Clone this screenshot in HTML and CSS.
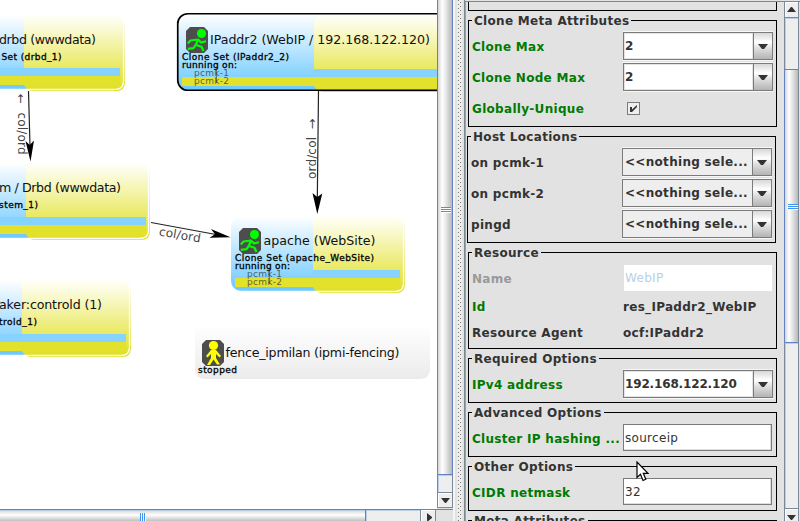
FILE: index.html
```html
<!DOCTYPE html>
<html lang="en">
<head>
<meta charset="utf-8">
<title>Cluster graph</title>
<link rel="stylesheet" href="styles.css">
</head>
<body>
<div class="app">
  <main class="graph-pane">
    <div class="graph-row">
      <svg class="graph" width="437" height="509" viewBox="0 0 437 509">
        <defs>
          <linearGradient id="blue" x1="0" y1="0" x2="0" y2="1"><stop offset="0" stop-color="#fff"/><stop offset="1" stop-color="#69c8ff"/></linearGradient>
          <linearGradient id="yellow" x1="0" y1="0" x2="0" y2="1"><stop offset="0" stop-color="#fffffa"/><stop offset="0.15" stop-color="#fbfbdc"/><stop offset="1" stop-color="#dfdf1e"/></linearGradient>
          <linearGradient id="grey" x1="0" y1="0" x2="0" y2="1"><stop offset="0" stop-color="#fff"/><stop offset="1" stop-color="#ebebeb"/></linearGradient>
          <symbol id="runner" viewBox="0 0 22 26">
            <path d="M4 0H18L22 4V22L18 26H4L0 22V4Z" fill="#4d4d4d"/>
            <circle cx="15.500" cy="6.500" r="4.500" fill="#0f0"/>
            <path d="M1.800 16.500L4.500 13.500L12 12.500L15 15.500L20 14.200M12 12.500L9.800 18L7.500 21.200L1.800 21.800M10 18L15.500 19.800L17.500 24" fill="none" stroke="#0f0" stroke-width="2.200" stroke-linejoin="round"/>
          </symbol>
          <symbol id="stander" viewBox="0 0 22 26">
            <path d="M4 0H18L22 4V22L18 26H4L0 22V4Z" fill="#4d4d4d"/>
            <circle cx="11.500" cy="5.500" r="4.600" fill="#ff0"/>
            <path d="M9 10H14L19 16L17.500 17.500L14 14V18L18 24.500H15L11.500 19.500L8 25H5L9 18V14L5.500 17.500L4 16Z" fill="#ff0"/>
          </symbol>
        </defs>

        <!-- drbd -->
        <rect x="-60" y="15" width="184" height="75" rx="10" fill="url(#blue)"/>
        <path d="M24 15H116Q125 15 125 25V82Q125 91 116 91H33Q27 91 24 85Z" fill="url(#yellow)"/>
        <path d="M-2 89.500H115Q123.500 89.500 123.500 81V23Q123.500 17 118 15.500" class="rim"/>
        <rect x="-2" y="68" width="122" height="8" class="band-blue"/>
        <rect x="-2" y="76" width="122" height="9" class="band-yellow"/>

        <!-- Filesystem -->
        <rect x="-60" y="163" width="208" height="75" rx="10" fill="url(#blue)"/>
        <path d="M26 163H141Q150 163 150 173V231Q150 240 141 240H35Q29 240 26 234Z" fill="url(#yellow)"/>
        <path d="M-2 238.500H140Q148.500 238.500 148.500 230V172Q148.500 166 143 164" class="rim"/>
        <rect x="-2" y="217" width="148" height="8" class="band-blue"/>
        <rect x="-2" y="225" width="148" height="9" class="band-yellow"/>

        <!-- controld -->
        <rect x="-60" y="280" width="190" height="75" rx="10" fill="url(#blue)"/>
        <path d="M22 280H122Q131 280 131 290V348Q131 357 122 357H31Q25 357 22 351Z" fill="url(#yellow)"/>
        <path d="M-2 355.500H121Q129.500 355.500 129.500 347V289Q129.500 283 124 281" class="rim"/>
        <rect x="-2" y="334" width="128" height="8" class="band-blue"/>
        <rect x="-2" y="342" width="128" height="9" class="band-yellow"/>

        <!-- IPaddr2 -->
        <rect x="178" y="14" width="300" height="76" rx="10" fill="url(#blue)"/>
        <path d="M314 23Q315 16 322 15H440V92H324Q317 92 314 86Z" fill="url(#yellow)"/>
        <rect x="314" y="69" width="130" height="8" class="band-blue"/>
        <rect x="182" y="77" width="260" height="9" class="band-yellow"/>
        <rect x="177.750" y="13.750" width="300" height="76.500" rx="10" fill="none" stroke="#000" stroke-width="1.700"/>

        <!-- apache -->
        <rect x="231" y="216" width="172" height="75" rx="10" fill="url(#blue)"/>
        <path d="M313 216H396Q405 216 405 226V284Q405 293 396 293H322Q316 293 313 287Z" fill="url(#yellow)"/>
        <path d="M240 291.500H395Q403.500 291.500 403.500 283V225Q403.500 219 398 217" class="rim"/>
        <rect x="313" y="270" width="87" height="8" class="band-blue"/>
        <rect x="235" y="278" width="165" height="9" class="band-yellow"/>

        <rect x="195" y="325" width="235" height="54" rx="9" fill="url(#grey)"/>

        <path d="M28.500 91L30 146M318.500 91L317.300 200M151 222.500L216 234.500" class="edge"/>
        <path d="M30.500 161.500L25.500 141L29.800 145L34 140.500ZM317.300 214L312.500 193L317.300 197L322.300 193.500ZM230.500 237.300L211 229L215 234.200L209.500 237.700Z"/>

        <g class="edge-label">
          <text transform="translate(17 94) rotate(90)" textLength="10" lengthAdjust="spacingAndGlyphs">←</text>
          <text transform="translate(18 112.500) rotate(90)" textLength="42">col/ord</text>
          <text transform="translate(316 179) rotate(-90)" textLength="42">ord/col</text>
          <text transform="translate(316 129.500) rotate(-90)" textLength="11" lengthAdjust="spacingAndGlyphs">→</text>
          <text transform="translate(158.500 235.500) rotate(9.500)" textLength="42">col/ord</text>
        </g>

        <use href="#runner" x="186" y="27" width="22" height="26"/>
        <use href="#runner" x="239" y="228" width="22" height="26"/>
        <use href="#stander" x="202" y="340" width="22" height="26"/>

        <g class="title">
          <text x="-1" y="44" textLength="97">drbd (wwwdata)</text>
          <text x="-1" y="192" textLength="122">m / Drbd (wwwdata)</text>
          <text x="-1" y="309" textLength="103">aker:controld (1)</text>
          <text x="210" y="44" textLength="220">IPaddr2 (WebIP / 192.168.122.120)</text>
          <text x="263.500" y="245" textLength="112">apache (WebSite)</text>
          <text x="225.500" y="357" textLength="174">fence_ipmilan (ipmi-fencing)</text>
        </g>
        <g class="sub">
          <text x="1.500" y="60" textLength="60">Set (drbd_1)</text>
          <text x="-1" y="208" textLength="39">stem_1)</text>
          <text x="-1" y="325" textLength="38">trold_1)</text>
          <text x="182" y="60" textLength="107">Clone Set (IPaddr2_2)</text>
          <text x="182" y="68" textLength="55">running on:</text>
          <text x="235" y="261" textLength="139">Clone Set (apache_WebSite)</text>
          <text x="235" y="269" textLength="55">running on:</text>
          <text x="198" y="373" textLength="39">stopped</text>
        </g>
        <g class="host">
          <text x="194" y="76" textLength="35">pcmk-1</text>
          <text x="194" y="84" textLength="35">pcmk-2</text>
          <text x="247" y="277" textLength="35">pcmk-1</text>
          <text x="247" y="285" textLength="35">pcmk-2</text>
        </g>
        <path d="M216.500 67V83M269.500 268V284" stroke="#333" stroke-opacity=".6"/>
      </svg>
      <div class="vbar vbar-left">
        <div class="thumb-v"><i class="grip-v"></i></div>
        <div class="track"></div>
        <div class="arrow-btn"><svg width="9" height="5"><path d="M0 0H9L5 5H4Z"/></svg></div>
      </div>
    </div>
    <div class="hbar">
      <div class="thumb-h"><i class="grip-h"></i></div>
      <div class="track-h"></div>
      <div class="arrow-h"><svg width="5" height="9"><path d="M0 0V9L5 5V4Z"/></svg></div>
      <div class="corner"></div>
    </div>
  </main>

  <div class="divider"><i class="dots"></i></div>

  <aside class="side">
    <div class="form">
      <section class="group group-cut"></section>

      <section class="group three">
        <h2>Clone Meta Attributes</h2>
        <div class="row"><label class="set">Clone Max</label><div class="combo edit"><span>2</span><b><svg width="10" height="5"><path d="M0 0H10L6 5H4Z"/></svg></b></div></div>
        <div class="row"><label class="set">Clone Node Max</label><div class="combo edit"><span>2</span><b><svg width="10" height="5"><path d="M0 0H10L6 5H4Z"/></svg></b></div></div>
        <div class="row"><label class="set">Globally-Unique</label><div class="check"><svg width="9" height="9"><path d="M1 3H3V5.500L8 1V3L3 8H1Z"/></svg></div></div>
      </section>

      <section class="group three shifted">
        <h2>Host Locations</h2>
        <div class="row"><label>on pcmk-1</label><div class="combo"><span>&lt;&lt;nothing sele...</span><b><svg width="10" height="5"><path d="M0 0H10L6 5H4Z"/></svg></b></div></div>
        <div class="row"><label>on pcmk-2</label><div class="combo"><span>&lt;&lt;nothing sele...</span><b><svg width="10" height="5"><path d="M0 0H10L6 5H4Z"/></svg></b></div></div>
        <div class="row"><label>pingd</label><div class="combo"><span>&lt;&lt;nothing sele...</span><b><svg width="10" height="5"><path d="M0 0H10L6 5H4Z"/></svg></b></div></div>
      </section>

      <section class="group resource">
        <h2>Resource</h2>
        <div class="row"><label class="off">Name</label><div class="input disabled">WebIP</div></div>
        <div class="row short"><label class="set">Id</label><span class="value">res_IPaddr2_WebIP</span></div>
        <div class="row short"><label>Resource Agent</label><span class="value">ocf:IPaddr2</span></div>
      </section>

      <section class="group one">
        <h2>Required Options</h2>
        <div class="row"><label class="set">IPv4 address</label><div class="combo edit"><span class="tight">192.168.122.120</span><b><svg width="10" height="5"><path d="M0 0H10L6 5H4Z"/></svg></b></div></div>
      </section>

      <section class="group one">
        <h2>Advanced Options</h2>
        <div class="row"><label class="set">Cluster IP hashing ...</label><div class="input">sourceip</div></div>
      </section>

      <section class="group one">
        <h2>Other Options</h2>
        <div class="row"><label class="set">CIDR netmask</label><div class="input">32</div></div>
      </section>

      <section class="group one">
        <h2>Meta Attributes</h2>
      </section>
    </div>
    <div class="vbar vbar-right">
      <div class="arrow-btn up"><svg width="9" height="5"><path d="M0 5H9L5 0H4Z"/></svg></div>
      <div class="track track-top"></div>
      <div class="thumb-v"><i class="grip-v"></i></div>
      <div class="track"></div>
      <div class="arrow-btn"><svg width="9" height="5"><path d="M0 0H9L5 5H4Z"/></svg></div>
    </div>
  </aside>
  <svg class="pointer" width="13" height="21" viewBox="0 0 13 21"><path d="M1 1V16.500L4.500 13.300L7 19.500L9.800 18.300L7.300 12.300H12Z" fill="#fff" stroke="#000" stroke-width="1.200"/></svg>
</div>
</body>
</html>
```

FILE: styles.css
```css
* { box-sizing: border-box; }

body {
  margin: 0;
  background: #e2e2e2;
  color: #333;
  font: bold 12px/15px "DejaVu Sans", sans-serif;
  letter-spacing: 0.3px;
}

.app {
  position: relative;
  display: flex;
  width: 800px;
  height: 521px;
  overflow: hidden;
}

svg { display: block; }

/* graph */
.graph-pane { width: 453px; display: flex; flex-direction: column; }
.graph-row { display: flex; height: 509px; }
.graph { background: #fff; flex: none; letter-spacing: 0; font-weight: normal; }
.rim { fill: none; stroke: #fff; stroke-width: 1.3; }
.band-blue { fill: #87d3ff; }
.band-yellow { fill: #e2e22c; }
.edge { fill: none; stroke: #222; stroke-width: 1.2; }
.edge-label { font-size: 12px; fill: #444; }
.title { font-size: 12.6px; fill: #111; }
.sub { font-size: 9px; fill: #000; stroke: #000; stroke-width: 0.3px; }
.host { font-size: 9px; fill: #333; fill-opacity: 0.75; }

/* scroll bars */
.vbar { display: flex; flex-direction: column; flex: none; }
.vbar-left { width: 16px; height: 508px; border-right: 1px solid #7a8a99; border-left: 1px solid #7a8a99; }
.thumb-v {
  margin: 0 -1px;
  border: 1px solid #6382bf;
  background: linear-gradient(90deg, #d5d5d5, #fff 30%, #e8e8e8 55%, #b8b8b8);
  padding-left: 3px;
}
.vbar-left .thumb-v { height: 475px; border-top: 0; padding-top: 207px; }
.grip-v {
  display: block;
  width: 10px;
  height: 5px;
  border: solid #3c95ee;
  border-width: 1px 0;
  background: linear-gradient(#3c95ee, #3c95ee) center / 100% 1px no-repeat #fff;
  box-shadow: 0 1px #fff;
}
.track { flex: 1; background: #eee; border-left: 1px solid #b8cfe5; border-top: 1px solid #b8cfe5; }
.arrow-btn {
  height: 16px;
  border-top: 1px solid #7a8a99;
  border-bottom: 1px solid #7a8a99;
  background: #eee;
  box-shadow: inset 1px 1px #fff;
  display: flex;
  align-items: center;
  justify-content: center;
  fill: #333;
}
.hbar { display: flex; height: 12px; border-top: 1px solid #6382bf; }
.thumb-h {
  width: 366px;
  border-right: 1px solid #6382bf;
  background: linear-gradient(#b8cfe5 0 1px, #ddd 1px, #fff 5px, #c0c0c0 11px);
  padding: 3px 0 0 140px;
}
.grip-h { display: block; width: 6px; height: 8px; background: repeating-linear-gradient(90deg, #3c95ee 0 1px, #fff 1px 2px); }
.track-h { width: 54px; background: #eee; box-shadow: inset 1px 1px #b8cfe5; }
.arrow-h { width: 16px; border: solid #7a8a99; border-width: 0 1px; background: #eee; box-shadow: inset 1px 1px #fff; padding: 3px 0 0 6px; fill: #333; }
.corner { flex: 1; background: #e2e2e2; }

.divider {
  width: 12px;
  border-right: 1px solid #7a8a8f;
  background: #e2e2e2;
  border-left: 2px solid #f5f5f5;
  padding-left: 2px;
}
.dots {
  display: block;
  width: 5px;
  height: 521px;
  background-color: #eee;
  background-image:
    conic-gradient(from 270deg at 1px 1px, #777 90deg, transparent 0),
    conic-gradient(from 270deg at 1px 1px, #777 90deg, transparent 0);
  background-size: 4px 4px;
  background-position: 1px 0, 3px 2px;
}

/* side panel */
.side {
  width: 335px;
  height: 520px;
  margin-top: 1px;
  border-top: 1px solid #7a8a8f;
  border-left: 1px solid #9aa3a8;
  display: flex;
}
.form {
  width: 318px;
  padding-left: 2px;
  display: flex;
  flex-direction: column;
  gap: 9px;
  overflow: hidden;
}
.group {
  flex: none;
  width: 309px;
  border: 1px solid #000;
  padding: 0 0 0 3px;
  display: flex;
  flex-direction: column;
}
.group-cut { height: 9px; border-top: 0; }
.shifted { margin-left: -1px; }
.three { height: 107px; gap: 1px; }
.resource { height: 97px; }
.one { height: 45px; }
.group h2 {
  margin: -8px 0 3px 0;
  padding: 1px 2px 0 2px;
  height: 15px;
  align-self: flex-start;
  background: #e2e2e2;
  font-size: inherit;
}
.three h2 { margin-bottom: 2px; }
.row { display: grid; grid-template-columns: 151px 150px; height: 30px; align-items: center; }
.row.short { height: 26px; }
label, .value { white-space: nowrap; padding-top: 2px; }
.set { color: #007a00; }
.off { color: #999; }
.combo {
  display: flex;
  height: 28px;
  border: 1px solid #7b7b7b;
  background: #eee;
  box-shadow: 0 -1px #f7f7f7, 0 1px #f7f7f7;
  line-height: 26px;
}
.combo span { flex: 1; padding-left: 2px; white-space: nowrap; }
.edit span { padding-left: 1px; background: #fff; box-shadow: inset 0 0 0 1px #e4e4e4; }
.combo .tight { letter-spacing: -0.15px; }
.combo b {
  width: 19px;
  border-left: 1px solid #7b7b7b;
  background: linear-gradient(#d8d8d8, #fff 35%, #ddd 60%, #b4b4b4);
  display: flex;
  align-items: center;
  justify-content: center;
  padding-top: 1px;
  fill: #333;
}
.check {
  width: 13px;
  height: 13px;
  margin: 1px 0 0 4px;
  border: 1px solid #7b7b7b;
  background: #eee;
  padding: 1px;
  fill: #333;
}
.input {
  height: 27px;
  width: 149px;
  margin-bottom: 1px;
  border: 1px solid #7b7b7b;
  box-shadow: inset -1px -1px #ddd;
  background: #fff;
  padding-left: 1px;
  font-weight: normal;
  line-height: 26px;
}
.input.disabled { height: 26px; margin: 0 0 0 1px; width: 148px; border: 0; box-shadow: none; color: #b8cfe5; }

.vbar-right { width: 15px; height: 519px; border-left: 1px solid #7a8a99; border-right: 1px solid #7a8a99; }
.vbar-right .up { border-top: 0; }
.vbar-right .thumb-v { height: 274px; margin-right: 0; border-right: 0; padding-top: 134px; }
.vbar-right .track-top { flex: none; height: 51px; }
.vbar-right .arrow-btn:last-child { height: 13px; border-bottom: 0; padding-top: 4px; }

.pointer { position: absolute; left: 636px; top: 461px; }
```
